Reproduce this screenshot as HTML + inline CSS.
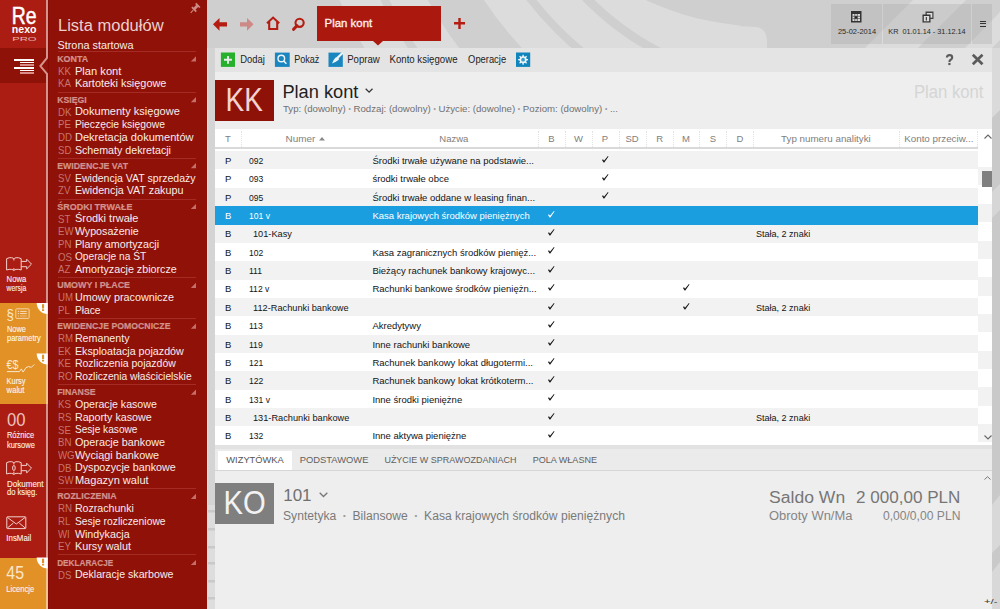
<!DOCTYPE html>
<html><head><meta charset="utf-8"><title>Plan kont</title>
<style>
*{margin:0;padding:0;box-sizing:border-box}
html,body{width:1000px;height:609px;overflow:hidden}
body{position:relative;background:#d3d3d3;font-family:"Liberation Sans",sans-serif}
.a{position:absolute;white-space:nowrap}
svg{overflow:visible}
</style></head><body>
<svg class="a" style="left:0;top:0" width="1000" height="609" viewBox="0 0 1000 609">
<rect width="1000" height="609" fill="#cfcfcf"/>
<circle cx="791" cy="-203" r="308" fill="none" stroke="#dcdcdc" stroke-width="120"/>
<circle cx="791" cy="-203" r="455.5" fill="none" stroke="#dcdcdc" stroke-width="79"/>
<circle cx="791" cy="-203" r="454" fill="none" stroke="#cfcfcf" stroke-width="8"/>
<circle cx="791" cy="-203" r="329.5" fill="none" stroke="#cfcfcf" stroke-width="8"/>
<circle cx="791" cy="-203" r="287" fill="none" stroke="#cfcfcf" stroke-width="8.5"/>
<path d="M640 0 H767 V48 H640 Z" fill="#dcdcdc"/>
<circle cx="765" cy="-255" r="281.5" fill="#cfcfcf"/>
<path d="M740 0 H767 V40 Q766 28.5 757 26.9 Q750 26.5 740 26.3 Z" fill="#cfcfcf"/>
<circle cx="791" cy="-203" r="287" fill="none" stroke="#cfcfcf" stroke-width="8.5"/>
<rect x="767" y="0" width="233" height="48" fill="#cfcfcf"/>
<path d="M913 0 L966 0 L918 48 L865 48 Z" fill="#dcdcdc"/>
<path d="M1000 12 L1000 40 L992 48 L965 48 Z" fill="#dcdcdc"/>
<path d="M992 230 L1000 222 L1000 240 L992 248 Z" fill="#dcdcdc"/>
<path d="M992 500 L1000 492 L1000 520 L992 528 Z" fill="#dcdcdc"/>
<rect x="207" y="48" width="8" height="561" fill="#d4d4d4"/>
<rect x="207" y="48" width="1" height="561" fill="#e2e2e2"/>
<rect x="207" y="505" width="8" height="104" fill="#dddddd"/>
<rect x="208" y="510" width="7" height="2.5" fill="#c9c9c9"/>
<rect x="208" y="528" width="7" height="2.5" fill="#c9c9c9"/>
<rect x="208" y="546" width="7" height="2.5" fill="#c9c9c9"/>
<rect x="208" y="562" width="7" height="2.5" fill="#c9c9c9"/>
<rect x="208" y="580" width="7" height="2.5" fill="#c9c9c9"/>
<rect x="208" y="597" width="7" height="2.5" fill="#c9c9c9"/>
</svg>
<div class="a" style="left:0px;top:0px;width:46px;height:609px;background:#ab1d13;"></div>
<div class="a" style="left:0px;top:48px;width:46px;height:35px;background:#8f1208;"></div>
<svg class="a" style="left:0;top:0" width="46" height="48" viewBox="0 0 46 48" font-family="Liberation Sans"><text x="11.8" y="24" font-size="23.5" fill="#fff" stroke="#fff" stroke-width="0.5" textLength="24.8" lengthAdjust="spacingAndGlyphs">Re</text><text x="11.8" y="33" font-size="10" font-weight="bold" fill="#fff" textLength="24.8" lengthAdjust="spacingAndGlyphs">nexo</text><text x="12.2" y="40.6" font-size="5.8" fill="#e9b3ae" textLength="24.4" lengthAdjust="spacingAndGlyphs">PRO</text></svg>
<div class="a" style="left:13.6px;top:59.1px;width:20.699999999999996px;height:1.6px;background:#fff;"></div>
<div class="a" style="left:20px;top:62px;width:14.299999999999997px;height:1.1px;background:#fff;"></div>
<div class="a" style="left:20px;top:64.3px;width:14.299999999999997px;height:1.5px;background:#d98c88;"></div>
<div class="a" style="left:13.6px;top:67px;width:20.699999999999996px;height:1.6px;background:#fff;"></div>
<div class="a" style="left:20px;top:70px;width:14.299999999999997px;height:1.1px;background:#fff;"></div>
<div class="a" style="left:20px;top:72.2px;width:14.299999999999997px;height:1.6px;background:#d98c88;"></div>
<div class="a" style="left:0px;top:303px;width:46px;height:101px;background:#e19126;"></div>
<div class="a" style="left:0px;top:557.5px;width:46px;height:52px;background:#e19126;"></div>
<div class="a" style="left:46px;top:0px;width:161px;height:609px;background:#8f1107;"></div>
<div class="a" style="left:48px;top:0px;width:1px;height:609px;background:#870b05;"></div>
<svg class="a" style="left:36px;top:0" width="14" height="609" viewBox="36 0 14 609"><path d="M47 57.6 L40.2 66.1 L47 74 Z" fill="#8f1107"/><path d="M47 0 V57.8 L40.4 66.1 L47 73.8 V609" fill="none" stroke="#d6938c" stroke-width="2"/></svg>
<svg class="a" style="left:0;top:0" width="1" height="1"><g stroke="#cf8a85" fill="none"><path d="M194.2 8.9 L197.9 5.2" stroke-width="2.8"/><path d="M195.7 3.3 L199.9 7.5" stroke-width="1.7"/><path d="M191.9 7.2 L196.3 11.6" stroke-width="1.7"/><path d="M193.3 10 L190.7 12.8" stroke-width="1.1"/></g></svg>
<svg class="a" style="left:0;top:0;overflow:visible" width="1" height="1"><text x="58" y="30.5" font-family="Liberation Sans" font-size="16" fill="#ebd0cf" font-weight="normal" text-anchor="start" textLength="105.6" lengthAdjust="spacingAndGlyphs" style="white-space:pre;">Lista modułów</text></svg>
<svg class="a" style="left:0;top:0;overflow:visible" width="1" height="1"><text x="57.5" y="48.8" font-family="Liberation Sans" font-size="11" fill="#f7eaea" font-weight="normal" text-anchor="start" textLength="76" lengthAdjust="spacingAndGlyphs" style="white-space:pre;">Strona startowa</text></svg>
<div class="a" style="left:58px;top:51px;width:138px;height:1px;background:#a52c24;"></div>
<svg class="a" style="left:0;top:0;overflow:visible" width="1" height="1"><text x="57.2" y="61.900000000000006" font-family="Liberation Sans" font-size="9.6" fill="#d3928d" font-weight="bold" text-anchor="start" textLength="31" lengthAdjust="spacingAndGlyphs" style="white-space:pre;stroke:#d3928d;stroke-width:0.2px;">KONTA</text></svg>
<svg class="a" style="left:0;top:0" width="1" height="1"><path d="M196 56.2 V61.4 H190.8 Z" fill="#c46f69"/></svg>
<div class="a" style="left:57.5px;top:65.81px;font-size:10.5px;line-height:10.5px;color:#c8746f;font-weight:normal;transform:scaleX(0.92);transform-origin:left top;">KK</div>
<svg class="a" style="left:0;top:0;overflow:visible" width="1" height="1"><text x="74.9" y="74.7" font-family="Liberation Sans" font-size="11" fill="#f9ebea" font-weight="normal" text-anchor="start" textLength="46.5" lengthAdjust="spacingAndGlyphs" style="white-space:pre;">Plan kont</text></svg>
<div class="a" style="left:57.5px;top:78.48px;font-size:10.5px;line-height:10.5px;color:#c8746f;font-weight:normal;transform:scaleX(0.92);transform-origin:left top;">KA</div>
<svg class="a" style="left:0;top:0;overflow:visible" width="1" height="1"><text x="74.9" y="87.37" font-family="Liberation Sans" font-size="11" fill="#f9ebea" font-weight="normal" text-anchor="start" textLength="91.5" lengthAdjust="spacingAndGlyphs" style="white-space:pre;">Kartoteki księgowe</text></svg>
<div class="a" style="left:58px;top:92px;width:138px;height:1px;background:#a52c24;"></div>
<svg class="a" style="left:0;top:0;overflow:visible" width="1" height="1"><text x="57.2" y="102.69000000000001" font-family="Liberation Sans" font-size="9.6" fill="#d3928d" font-weight="bold" text-anchor="start" textLength="29.5" lengthAdjust="spacingAndGlyphs" style="white-space:pre;stroke:#d3928d;stroke-width:0.2px;">KSIĘGI</text></svg>
<svg class="a" style="left:0;top:0" width="1" height="1"><path d="M196 97.0 V102.2 H190.8 Z" fill="#c46f69"/></svg>
<div class="a" style="left:57.5px;top:106.60px;font-size:10.5px;line-height:10.5px;color:#c8746f;font-weight:normal;transform:scaleX(0.92);transform-origin:left top;">DK</div>
<svg class="a" style="left:0;top:0;overflow:visible" width="1" height="1"><text x="74.9" y="115.49000000000001" font-family="Liberation Sans" font-size="11" fill="#f9ebea" font-weight="normal" text-anchor="start" textLength="104.9" lengthAdjust="spacingAndGlyphs" style="white-space:pre;">Dokumenty księgowe</text></svg>
<div class="a" style="left:57.5px;top:119.27px;font-size:10.5px;line-height:10.5px;color:#c8746f;font-weight:normal;transform:scaleX(0.92);transform-origin:left top;">PE</div>
<svg class="a" style="left:0;top:0;overflow:visible" width="1" height="1"><text x="74.9" y="128.16" font-family="Liberation Sans" font-size="11" fill="#f9ebea" font-weight="normal" text-anchor="start" textLength="90.1" lengthAdjust="spacingAndGlyphs" style="white-space:pre;">Pieczęcie księgowe</text></svg>
<div class="a" style="left:57.5px;top:131.94px;font-size:10.5px;line-height:10.5px;color:#c8746f;font-weight:normal;transform:scaleX(0.92);transform-origin:left top;">DD</div>
<svg class="a" style="left:0;top:0;overflow:visible" width="1" height="1"><text x="74.9" y="140.82999999999998" font-family="Liberation Sans" font-size="11" fill="#f9ebea" font-weight="normal" text-anchor="start" textLength="118.7" lengthAdjust="spacingAndGlyphs" style="white-space:pre;">Dekretacja dokumentów</text></svg>
<div class="a" style="left:57.5px;top:144.61px;font-size:10.5px;line-height:10.5px;color:#c8746f;font-weight:normal;transform:scaleX(0.92);transform-origin:left top;">SD</div>
<svg class="a" style="left:0;top:0;overflow:visible" width="1" height="1"><text x="74.9" y="153.49999999999997" font-family="Liberation Sans" font-size="11" fill="#f9ebea" font-weight="normal" text-anchor="start" textLength="96.1" lengthAdjust="spacingAndGlyphs" style="white-space:pre;">Schematy dekretacji</text></svg>
<div class="a" style="left:58px;top:158px;width:138px;height:1px;background:#a52c24;"></div>
<svg class="a" style="left:0;top:0;overflow:visible" width="1" height="1"><text x="57.2" y="168.82" font-family="Liberation Sans" font-size="9.6" fill="#d3928d" font-weight="bold" text-anchor="start" textLength="70.9" lengthAdjust="spacingAndGlyphs" style="white-space:pre;stroke:#d3928d;stroke-width:0.2px;">EWIDENCJE VAT</text></svg>
<svg class="a" style="left:0;top:0" width="1" height="1"><path d="M196 163.1 V168.3 H190.8 Z" fill="#c46f69"/></svg>
<div class="a" style="left:57.5px;top:172.73px;font-size:10.5px;line-height:10.5px;color:#c8746f;font-weight:normal;transform:scaleX(0.92);transform-origin:left top;">SV</div>
<svg class="a" style="left:0;top:0;overflow:visible" width="1" height="1"><text x="74.9" y="181.62" font-family="Liberation Sans" font-size="11" fill="#f9ebea" font-weight="normal" text-anchor="start" textLength="120.7" lengthAdjust="spacingAndGlyphs" style="white-space:pre;">Ewidencja VAT sprzedaży</text></svg>
<div class="a" style="left:57.5px;top:185.40px;font-size:10.5px;line-height:10.5px;color:#c8746f;font-weight:normal;transform:scaleX(0.92);transform-origin:left top;">ZV</div>
<svg class="a" style="left:0;top:0;overflow:visible" width="1" height="1"><text x="74.9" y="194.29" font-family="Liberation Sans" font-size="11" fill="#f9ebea" font-weight="normal" text-anchor="start" textLength="108.5" lengthAdjust="spacingAndGlyphs" style="white-space:pre;">Ewidencja VAT zakupu</text></svg>
<div class="a" style="left:58px;top:199px;width:138px;height:1px;background:#a52c24;"></div>
<svg class="a" style="left:0;top:0;overflow:visible" width="1" height="1"><text x="57.2" y="209.60999999999999" font-family="Liberation Sans" font-size="9.6" fill="#d3928d" font-weight="bold" text-anchor="start" textLength="75.2" lengthAdjust="spacingAndGlyphs" style="white-space:pre;stroke:#d3928d;stroke-width:0.2px;">ŚRODKI TRWAŁE</text></svg>
<svg class="a" style="left:0;top:0" width="1" height="1"><path d="M196 203.9 V209.1 H190.8 Z" fill="#c46f69"/></svg>
<div class="a" style="left:57.5px;top:213.52px;font-size:10.5px;line-height:10.5px;color:#c8746f;font-weight:normal;transform:scaleX(0.92);transform-origin:left top;">ST</div>
<svg class="a" style="left:0;top:0;overflow:visible" width="1" height="1"><text x="74.9" y="222.41" font-family="Liberation Sans" font-size="11" fill="#f9ebea" font-weight="normal" text-anchor="start" textLength="63.5" lengthAdjust="spacingAndGlyphs" style="white-space:pre;">Środki trwałe</text></svg>
<div class="a" style="left:57.5px;top:226.19px;font-size:10.5px;line-height:10.5px;color:#c8746f;font-weight:normal;transform:scaleX(0.92);transform-origin:left top;">EW</div>
<svg class="a" style="left:0;top:0;overflow:visible" width="1" height="1"><text x="74.9" y="235.07999999999998" font-family="Liberation Sans" font-size="11" fill="#f9ebea" font-weight="normal" text-anchor="start" textLength="63.9" lengthAdjust="spacingAndGlyphs" style="white-space:pre;">Wyposażenie</text></svg>
<div class="a" style="left:57.5px;top:238.86px;font-size:10.5px;line-height:10.5px;color:#c8746f;font-weight:normal;transform:scaleX(0.92);transform-origin:left top;">PN</div>
<svg class="a" style="left:0;top:0;overflow:visible" width="1" height="1"><text x="74.9" y="247.74999999999997" font-family="Liberation Sans" font-size="11" fill="#f9ebea" font-weight="normal" text-anchor="start" textLength="84.2" lengthAdjust="spacingAndGlyphs" style="white-space:pre;">Plany amortyzacji</text></svg>
<div class="a" style="left:57.5px;top:251.53px;font-size:10.5px;line-height:10.5px;color:#c8746f;font-weight:normal;transform:scaleX(0.92);transform-origin:left top;">OS</div>
<svg class="a" style="left:0;top:0;overflow:visible" width="1" height="1"><text x="74.9" y="260.41999999999996" font-family="Liberation Sans" font-size="11" fill="#f9ebea" font-weight="normal" text-anchor="start" textLength="71.4" lengthAdjust="spacingAndGlyphs" style="white-space:pre;">Operacje na ŚT</text></svg>
<div class="a" style="left:57.5px;top:264.20px;font-size:10.5px;line-height:10.5px;color:#c8746f;font-weight:normal;transform:scaleX(0.92);transform-origin:left top;">AZ</div>
<svg class="a" style="left:0;top:0;overflow:visible" width="1" height="1"><text x="74.9" y="273.09" font-family="Liberation Sans" font-size="11" fill="#f9ebea" font-weight="normal" text-anchor="start" textLength="101.9" lengthAdjust="spacingAndGlyphs" style="white-space:pre;">Amortyzacje zbiorcze</text></svg>
<div class="a" style="left:58px;top:277px;width:138px;height:1px;background:#a52c24;"></div>
<svg class="a" style="left:0;top:0;overflow:visible" width="1" height="1"><text x="57.2" y="288.40999999999997" font-family="Liberation Sans" font-size="9.6" fill="#d3928d" font-weight="bold" text-anchor="start" textLength="72.9" lengthAdjust="spacingAndGlyphs" style="white-space:pre;stroke:#d3928d;stroke-width:0.2px;">UMOWY I PŁACE</text></svg>
<svg class="a" style="left:0;top:0" width="1" height="1"><path d="M196 282.7 V287.9 H190.8 Z" fill="#c46f69"/></svg>
<div class="a" style="left:57.5px;top:292.32px;font-size:10.5px;line-height:10.5px;color:#c8746f;font-weight:normal;transform:scaleX(0.92);transform-origin:left top;">UM</div>
<svg class="a" style="left:0;top:0;overflow:visible" width="1" height="1"><text x="74.9" y="301.21" font-family="Liberation Sans" font-size="11" fill="#f9ebea" font-weight="normal" text-anchor="start" textLength="99.0" lengthAdjust="spacingAndGlyphs" style="white-space:pre;">Umowy pracownicze</text></svg>
<div class="a" style="left:57.5px;top:304.99px;font-size:10.5px;line-height:10.5px;color:#c8746f;font-weight:normal;transform:scaleX(0.92);transform-origin:left top;">PL</div>
<svg class="a" style="left:0;top:0;overflow:visible" width="1" height="1"><text x="74.9" y="313.88" font-family="Liberation Sans" font-size="11" fill="#f9ebea" font-weight="normal" text-anchor="start" textLength="25.7" lengthAdjust="spacingAndGlyphs" style="white-space:pre;">Płace</text></svg>
<div class="a" style="left:58px;top:318px;width:138px;height:1px;background:#a52c24;"></div>
<svg class="a" style="left:0;top:0;overflow:visible" width="1" height="1"><text x="57.2" y="329.19999999999993" font-family="Liberation Sans" font-size="9.6" fill="#d3928d" font-weight="bold" text-anchor="start" textLength="113.3" lengthAdjust="spacingAndGlyphs" style="white-space:pre;stroke:#d3928d;stroke-width:0.2px;">EWIDENCJE POMOCNICZE</text></svg>
<svg class="a" style="left:0;top:0" width="1" height="1"><path d="M196 323.5 V328.7 H190.8 Z" fill="#c46f69"/></svg>
<div class="a" style="left:57.5px;top:333.11px;font-size:10.5px;line-height:10.5px;color:#c8746f;font-weight:normal;transform:scaleX(0.92);transform-origin:left top;">RM</div>
<svg class="a" style="left:0;top:0;overflow:visible" width="1" height="1"><text x="74.9" y="341.99999999999994" font-family="Liberation Sans" font-size="11" fill="#f9ebea" font-weight="normal" text-anchor="start" textLength="54.7" lengthAdjust="spacingAndGlyphs" style="white-space:pre;">Remanenty</text></svg>
<div class="a" style="left:57.5px;top:345.78px;font-size:10.5px;line-height:10.5px;color:#c8746f;font-weight:normal;transform:scaleX(0.92);transform-origin:left top;">EK</div>
<svg class="a" style="left:0;top:0;overflow:visible" width="1" height="1"><text x="74.9" y="354.66999999999996" font-family="Liberation Sans" font-size="11" fill="#f9ebea" font-weight="normal" text-anchor="start" textLength="108.9" lengthAdjust="spacingAndGlyphs" style="white-space:pre;">Eksploatacja pojazdów</text></svg>
<div class="a" style="left:57.5px;top:358.45px;font-size:10.5px;line-height:10.5px;color:#c8746f;font-weight:normal;transform:scaleX(0.92);transform-origin:left top;">KE</div>
<svg class="a" style="left:0;top:0;overflow:visible" width="1" height="1"><text x="74.9" y="367.34" font-family="Liberation Sans" font-size="11" fill="#f9ebea" font-weight="normal" text-anchor="start" textLength="100.9" lengthAdjust="spacingAndGlyphs" style="white-space:pre;">Rozliczenia pojazdów</text></svg>
<div class="a" style="left:57.5px;top:371.12px;font-size:10.5px;line-height:10.5px;color:#c8746f;font-weight:normal;transform:scaleX(0.92);transform-origin:left top;">RO</div>
<svg class="a" style="left:0;top:0;overflow:visible" width="1" height="1"><text x="74.9" y="380.01" font-family="Liberation Sans" font-size="11" fill="#f9ebea" font-weight="normal" text-anchor="start" textLength="116.7" lengthAdjust="spacingAndGlyphs" style="white-space:pre;">Rozliczenia właścicielskie</text></svg>
<div class="a" style="left:58px;top:384px;width:138px;height:1px;background:#a52c24;"></div>
<svg class="a" style="left:0;top:0;overflow:visible" width="1" height="1"><text x="57.2" y="395.3299999999999" font-family="Liberation Sans" font-size="9.6" fill="#d3928d" font-weight="bold" text-anchor="start" textLength="38.4" lengthAdjust="spacingAndGlyphs" style="white-space:pre;stroke:#d3928d;stroke-width:0.2px;">FINANSE</text></svg>
<svg class="a" style="left:0;top:0" width="1" height="1"><path d="M196 389.6 V394.8 H190.8 Z" fill="#c46f69"/></svg>
<div class="a" style="left:57.5px;top:399.24px;font-size:10.5px;line-height:10.5px;color:#c8746f;font-weight:normal;transform:scaleX(0.92);transform-origin:left top;">KS</div>
<svg class="a" style="left:0;top:0;overflow:visible" width="1" height="1"><text x="74.9" y="408.12999999999994" font-family="Liberation Sans" font-size="11" fill="#f9ebea" font-weight="normal" text-anchor="start" textLength="81.9" lengthAdjust="spacingAndGlyphs" style="white-space:pre;">Operacje kasowe</text></svg>
<div class="a" style="left:57.5px;top:411.91px;font-size:10.5px;line-height:10.5px;color:#c8746f;font-weight:normal;transform:scaleX(0.92);transform-origin:left top;">RS</div>
<svg class="a" style="left:0;top:0;overflow:visible" width="1" height="1"><text x="74.9" y="420.79999999999995" font-family="Liberation Sans" font-size="11" fill="#f9ebea" font-weight="normal" text-anchor="start" textLength="76.9" lengthAdjust="spacingAndGlyphs" style="white-space:pre;">Raporty kasowe</text></svg>
<div class="a" style="left:57.5px;top:424.58px;font-size:10.5px;line-height:10.5px;color:#c8746f;font-weight:normal;transform:scaleX(0.92);transform-origin:left top;">SE</div>
<svg class="a" style="left:0;top:0;overflow:visible" width="1" height="1"><text x="74.9" y="433.46999999999997" font-family="Liberation Sans" font-size="11" fill="#f9ebea" font-weight="normal" text-anchor="start" textLength="62.6" lengthAdjust="spacingAndGlyphs" style="white-space:pre;">Sesje kasowe</text></svg>
<div class="a" style="left:57.5px;top:437.25px;font-size:10.5px;line-height:10.5px;color:#c8746f;font-weight:normal;transform:scaleX(0.92);transform-origin:left top;">BN</div>
<svg class="a" style="left:0;top:0;overflow:visible" width="1" height="1"><text x="74.9" y="446.14" font-family="Liberation Sans" font-size="11" fill="#f9ebea" font-weight="normal" text-anchor="start" textLength="90.1" lengthAdjust="spacingAndGlyphs" style="white-space:pre;">Operacje bankowe</text></svg>
<div class="a" style="left:57.5px;top:449.92px;font-size:10.5px;line-height:10.5px;color:#c8746f;font-weight:normal;transform:scaleX(0.92);transform-origin:left top;">WG</div>
<svg class="a" style="left:0;top:0;overflow:visible" width="1" height="1"><text x="74.9" y="458.81" font-family="Liberation Sans" font-size="11" fill="#f9ebea" font-weight="normal" text-anchor="start" textLength="84.2" lengthAdjust="spacingAndGlyphs" style="white-space:pre;">Wyciągi bankowe</text></svg>
<div class="a" style="left:57.5px;top:462.59px;font-size:10.5px;line-height:10.5px;color:#c8746f;font-weight:normal;transform:scaleX(0.92);transform-origin:left top;">DB</div>
<svg class="a" style="left:0;top:0;overflow:visible" width="1" height="1"><text x="74.9" y="471.48" font-family="Liberation Sans" font-size="11" fill="#f9ebea" font-weight="normal" text-anchor="start" textLength="100.9" lengthAdjust="spacingAndGlyphs" style="white-space:pre;">Dyspozycje bankowe</text></svg>
<div class="a" style="left:57.5px;top:475.26px;font-size:10.5px;line-height:10.5px;color:#c8746f;font-weight:normal;transform:scaleX(0.92);transform-origin:left top;">SW</div>
<svg class="a" style="left:0;top:0;overflow:visible" width="1" height="1"><text x="74.9" y="484.15000000000003" font-family="Liberation Sans" font-size="11" fill="#f9ebea" font-weight="normal" text-anchor="start" textLength="73.8" lengthAdjust="spacingAndGlyphs" style="white-space:pre;">Magazyn walut</text></svg>
<div class="a" style="left:58px;top:488px;width:138px;height:1px;background:#a52c24;"></div>
<svg class="a" style="left:0;top:0;overflow:visible" width="1" height="1"><text x="57.2" y="499.46999999999997" font-family="Liberation Sans" font-size="9.6" fill="#d3928d" font-weight="bold" text-anchor="start" textLength="59.5" lengthAdjust="spacingAndGlyphs" style="white-space:pre;stroke:#d3928d;stroke-width:0.2px;">ROZLICZENIA</text></svg>
<svg class="a" style="left:0;top:0" width="1" height="1"><path d="M196 493.8 V499.0 H190.8 Z" fill="#c46f69"/></svg>
<div class="a" style="left:57.5px;top:503.38px;font-size:10.5px;line-height:10.5px;color:#c8746f;font-weight:normal;transform:scaleX(0.92);transform-origin:left top;">RN</div>
<svg class="a" style="left:0;top:0;overflow:visible" width="1" height="1"><text x="74.9" y="512.27" font-family="Liberation Sans" font-size="11" fill="#f9ebea" font-weight="normal" text-anchor="start" textLength="59.0" lengthAdjust="spacingAndGlyphs" style="white-space:pre;">Rozrachunki</text></svg>
<div class="a" style="left:57.5px;top:516.05px;font-size:10.5px;line-height:10.5px;color:#c8746f;font-weight:normal;transform:scaleX(0.92);transform-origin:left top;">RL</div>
<svg class="a" style="left:0;top:0;overflow:visible" width="1" height="1"><text x="74.9" y="524.9399999999999" font-family="Liberation Sans" font-size="11" fill="#f9ebea" font-weight="normal" text-anchor="start" textLength="90.7" lengthAdjust="spacingAndGlyphs" style="white-space:pre;">Sesje rozliczeniowe</text></svg>
<div class="a" style="left:57.5px;top:528.72px;font-size:10.5px;line-height:10.5px;color:#c8746f;font-weight:normal;transform:scaleX(0.92);transform-origin:left top;">WI</div>
<svg class="a" style="left:0;top:0;overflow:visible" width="1" height="1"><text x="74.9" y="537.6099999999999" font-family="Liberation Sans" font-size="11" fill="#f9ebea" font-weight="normal" text-anchor="start" textLength="54.7" lengthAdjust="spacingAndGlyphs" style="white-space:pre;">Windykacja</text></svg>
<div class="a" style="left:57.5px;top:541.39px;font-size:10.5px;line-height:10.5px;color:#c8746f;font-weight:normal;transform:scaleX(0.92);transform-origin:left top;">EY</div>
<svg class="a" style="left:0;top:0;overflow:visible" width="1" height="1"><text x="74.9" y="550.2799999999999" font-family="Liberation Sans" font-size="11" fill="#f9ebea" font-weight="normal" text-anchor="start" textLength="56.1" lengthAdjust="spacingAndGlyphs" style="white-space:pre;">Kursy walut</text></svg>
<div class="a" style="left:58px;top:554px;width:138px;height:1px;background:#a52c24;"></div>
<svg class="a" style="left:0;top:0;overflow:visible" width="1" height="1"><text x="57.2" y="565.6" font-family="Liberation Sans" font-size="9.6" fill="#d3928d" font-weight="bold" text-anchor="start" textLength="56" lengthAdjust="spacingAndGlyphs" style="white-space:pre;stroke:#d3928d;stroke-width:0.2px;">DEKLARACJE</text></svg>
<svg class="a" style="left:0;top:0" width="1" height="1"><path d="M196 559.9 V565.1 H190.8 Z" fill="#c46f69"/></svg>
<div class="a" style="left:57.5px;top:569.51px;font-size:10.5px;line-height:10.5px;color:#c8746f;font-weight:normal;transform:scaleX(0.92);transform-origin:left top;">DS</div>
<svg class="a" style="left:0;top:0;overflow:visible" width="1" height="1"><text x="74.9" y="578.4" font-family="Liberation Sans" font-size="11" fill="#f9ebea" font-weight="normal" text-anchor="start" textLength="98.6" lengthAdjust="spacingAndGlyphs" style="white-space:pre;">Deklaracje skarbowe</text></svg>
<svg class="a" style="left:0;top:0" width="1" height="1"><g transform="translate(6.1 257.1)" fill="none" stroke="#f2cfcb" stroke-width="1"><path d="M0.5 1.6 Q3 0.2 5.6 0.6 Q7.1 0.9 7.8 1.8 Q8.5 0.9 10 0.6 Q12.6 0.2 15.1 1.6 V12.9 Q12.6 11.9 10 12.3 Q8.5 12.6 7.8 13.4 Q7.1 12.6 5.6 12.3 Q3 11.9 0.5 12.9 Z"/><path d="M7.8 1.8 V3.4 M7.8 11 V13.2"/><path d="M15.1 4.3 H20.6 V2.1 L25.4 7 L20.6 11.8 V9.6 H15.1" stroke-linejoin="round"/></g></svg>
<svg class="a" style="left:0;top:0;overflow:visible" width="1" height="1"><text x="6.6" y="281.8" font-family="Liberation Sans" font-size="8.2" fill="#fbf0ef" font-weight="normal" text-anchor="start" textLength="19.7" lengthAdjust="spacingAndGlyphs" style="white-space:pre;stroke:#fbf0ef;stroke-width:0.1px;">Nowa</text></svg>
<svg class="a" style="left:0;top:0;overflow:visible" width="1" height="1"><text x="6.6" y="290.5" font-family="Liberation Sans" font-size="8.2" fill="#fbf0ef" font-weight="normal" text-anchor="start" textLength="19.7" lengthAdjust="spacingAndGlyphs" style="white-space:pre;stroke:#fbf0ef;stroke-width:0.1px;">wersja</text></svg>
<svg class="a" style="left:0;top:0" width="1" height="1"><text x="6.6" y="319.6" font-size="14.5" fill="#fbe6cc" font-family="Liberation Sans" textLength="7.4" lengthAdjust="spacingAndGlyphs">§</text><rect x="15.8" y="308.8" width="13.3" height="9.6" rx="0.8" fill="none" stroke="#f5d3a6" stroke-width="1"/><path d="M17.8 311.4 H19 M20.1 311.4 H26.7 M17.8 313.6 H19 M20.1 313.6 H26.7" stroke="#fbe6cc" stroke-width="0.9"/><path d="M17.8 316 H19 M20.1 316 H26.7" stroke="#f0c48a" stroke-width="0.9"/></svg>
<svg class="a" style="left:0;top:0;overflow:visible" width="1" height="1"><text x="7" y="332.4" font-family="Liberation Sans" font-size="8.2" fill="#fff7ec" font-weight="normal" text-anchor="start" textLength="18.9" lengthAdjust="spacingAndGlyphs" style="white-space:pre;stroke:#fff7ec;stroke-width:0.1px;">Nowe</text></svg>
<svg class="a" style="left:0;top:0;overflow:visible" width="1" height="1"><text x="7" y="341.2" font-family="Liberation Sans" font-size="8.2" fill="#fff7ec" font-weight="normal" text-anchor="start" textLength="33.7" lengthAdjust="spacingAndGlyphs" style="white-space:pre;stroke:#fff7ec;stroke-width:0.1px;">parametry</text></svg>
<svg class="a" style="left:0;top:0" width="1" height="1"><text x="6.6" y="368.9" font-size="12" fill="#fbe6cc" font-family="Liberation Sans" textLength="12" lengthAdjust="spacingAndGlyphs">€$</text><path d="M6.9 371.6 H19.5" stroke="#fbe6cc" stroke-width="1"/><path d="M19.5 371.5 L21.3 368.9 L23.1 372.1 L26 367.6 L28.5 366.6 L31.4 367.3 L34.3 364.4" fill="none" stroke="#fbe6cc" stroke-width="1"/></svg>
<svg class="a" style="left:0;top:0;overflow:visible" width="1" height="1"><text x="6.6" y="384.2" font-family="Liberation Sans" font-size="8.2" fill="#fff7ec" font-weight="normal" text-anchor="start" textLength="18.9" lengthAdjust="spacingAndGlyphs" style="white-space:pre;stroke:#fff7ec;stroke-width:0.1px;">Kursy</text></svg>
<svg class="a" style="left:0;top:0;overflow:visible" width="1" height="1"><text x="6.6" y="393.2" font-family="Liberation Sans" font-size="8.2" fill="#fff7ec" font-weight="normal" text-anchor="start" textLength="17.9" lengthAdjust="spacingAndGlyphs" style="white-space:pre;stroke:#fff7ec;stroke-width:0.1px;">walut</text></svg>
<div class="a" style="left:46px;top:303px;width:2px;height:101px;background:#f0c58c;"></div>
<div class="a" style="left:46px;top:557.5px;width:2px;height:52px;background:#f0c58c;"></div>
<svg class="a" style="left:0;top:0" width="1" height="1"><clipPath id="cb303"><rect x="36" y="303" width="11.6" height="11.5"/></clipPath><circle cx="47.6" cy="303" r="10.9" fill="#fff" clip-path="url(#cb303)"/><rect x="42" y="304.2" width="2.1" height="4.3" fill="#e19126"/><rect x="42" y="309.2" width="2.1" height="1.8" fill="#e19126"/></svg>
<svg class="a" style="left:0;top:0" width="1" height="1"><clipPath id="cb353"><rect x="36" y="353.5" width="11.6" height="11.5"/></clipPath><circle cx="47.6" cy="353.5" r="10.9" fill="#fff" clip-path="url(#cb353)"/><rect x="42" y="354.7" width="2.1" height="4.3" fill="#e19126"/><rect x="42" y="359.7" width="2.1" height="1.8" fill="#e19126"/></svg>
<svg class="a" style="left:0;top:0" width="1" height="1"><clipPath id="cb557"><rect x="36" y="557.5" width="11.6" height="11.5"/></clipPath><circle cx="47.6" cy="557.5" r="10.9" fill="#fff" clip-path="url(#cb557)"/><rect x="42" y="558.7" width="2.1" height="4.3" fill="#e19126"/><rect x="42" y="563.7" width="2.1" height="1.8" fill="#e19126"/></svg>
<svg class="a" style="left:0;top:0;overflow:visible" width="1" height="1"><text x="7" y="425.5" font-family="Liberation Sans" font-size="19" fill="#eec3bf" font-weight="normal" text-anchor="start" textLength="18.5" lengthAdjust="spacingAndGlyphs" style="white-space:pre;">00</text></svg>
<svg class="a" style="left:0;top:0;overflow:visible" width="1" height="1"><text x="6.9" y="438.2" font-family="Liberation Sans" font-size="8.2" fill="#fbf0ef" font-weight="normal" text-anchor="start" textLength="27.3" lengthAdjust="spacingAndGlyphs" style="white-space:pre;stroke:#fbf0ef;stroke-width:0.1px;">Różnice</text></svg>
<svg class="a" style="left:0;top:0;overflow:visible" width="1" height="1"><text x="6.9" y="447.9" font-family="Liberation Sans" font-size="8.2" fill="#fbf0ef" font-weight="normal" text-anchor="start" textLength="28" lengthAdjust="spacingAndGlyphs" style="white-space:pre;stroke:#fbf0ef;stroke-width:0.1px;">kursowe</text></svg>
<svg class="a" style="left:0;top:0" width="1" height="1"><g transform="translate(6.1 461.1)" fill="none" stroke="#f2cfcb" stroke-width="1"><path d="M0.5 1.6 Q3 0.2 5.6 0.6 Q7.1 0.9 7.8 1.8 Q8.5 0.9 10 0.6 Q12.6 0.2 15.1 1.6 V12.9 Q12.6 11.9 10 12.3 Q8.5 12.6 7.8 13.4 Q7.1 12.6 5.6 12.3 Q3 11.9 0.5 12.9 Z"/><path d="M7.8 1.8 V3.4 M7.8 10.6 V13.2"/><ellipse cx="7.8" cy="6.9" rx="1.3" ry="2.6"/><path d="M15.1 4.3 H20.6 V2.1 L25.4 7 L20.6 11.8 V9.6 H15.1" stroke-linejoin="round"/></g></svg>
<svg class="a" style="left:0;top:0;overflow:visible" width="1" height="1"><text x="6.9" y="486.5" font-family="Liberation Sans" font-size="8.2" fill="#fbf0ef" font-weight="normal" text-anchor="start" textLength="36.7" lengthAdjust="spacingAndGlyphs" style="white-space:pre;stroke:#fbf0ef;stroke-width:0.1px;">Dokument</text></svg>
<svg class="a" style="left:0;top:0;overflow:visible" width="1" height="1"><text x="6.9" y="495.2" font-family="Liberation Sans" font-size="8.2" fill="#fbf0ef" font-weight="normal" text-anchor="start" textLength="30.6" lengthAdjust="spacingAndGlyphs" style="white-space:pre;stroke:#fbf0ef;stroke-width:0.1px;">do księg.</text></svg>
<svg class="a" style="left:0;top:0" width="1" height="1"><g fill="none" stroke="#f2cfcb" stroke-width="1"><rect x="6.8" y="516.8" width="19" height="11.8" rx="0.6"/><path d="M7.4 517.4 L16.3 524 L25.2 517.4 M7.4 528 L13.4 523 M25.2 528 L19.2 523"/></g></svg>
<svg class="a" style="left:0;top:0;overflow:visible" width="1" height="1"><text x="6.3" y="540.5" font-family="Liberation Sans" font-size="8.2" fill="#fbf0ef" font-weight="normal" text-anchor="start" textLength="25" lengthAdjust="spacingAndGlyphs" style="white-space:pre;stroke:#fbf0ef;stroke-width:0.1px;">InsMail</text></svg>
<svg class="a" style="left:0;top:0;overflow:visible" width="1" height="1"><text x="6.3" y="578.9" font-family="Liberation Sans" font-size="19" fill="#fbe6c8" font-weight="normal" text-anchor="start" textLength="17.7" lengthAdjust="spacingAndGlyphs" style="white-space:pre;">45</text></svg>
<svg class="a" style="left:0;top:0;overflow:visible" width="1" height="1"><text x="6.3" y="591.6" font-family="Liberation Sans" font-size="8.2" fill="#fff7ec" font-weight="normal" text-anchor="start" textLength="27.8" lengthAdjust="spacingAndGlyphs" style="white-space:pre;stroke:#fff7ec;stroke-width:0.1px;">Licencje</text></svg>
<svg class="a" style="left:213px;top:17.6px" width="15" height="13" viewBox="0 0 15 13"><path d="M0 6.3 L6.5 0 V4.2 H14 V8.6 H6.5 V12.8 Z" fill="#b51c12"/></svg>
<svg class="a" style="left:240px;top:17.6px" width="14" height="13" viewBox="0 0 14 13"><path d="M13.5 6.3 L7 0 V4.2 H0 V8.6 H7 V12.8 Z" fill="#cd8985"/></svg>
<svg class="a" style="left:0;top:0" width="1" height="1"><path d="M267 23.2 L273.1 17.6 L279.2 23.2 M269.2 21.6 V29 H277.2 V21.6" fill="none" stroke="#b51c12" stroke-width="2.1" stroke-linejoin="miter"/></svg>
<svg class="a" style="left:0;top:0" width="1" height="1"><circle cx="299.6" cy="22.8" r="4.1" fill="none" stroke="#b51c12" stroke-width="2.1"/><path d="M296.9 25.7 L293.6 29.3" stroke="#b51c12" stroke-width="3.1" stroke-linecap="round"/></svg>
<div class="a" style="left:316.5px;top:6.3px;width:124px;height:35px;background:#aa180e;"></div>
<svg class="a" style="left:373px;top:41px" width="10" height="5"><path d="M0 0 H10 L5 4.5 Z" fill="#aa180e"/></svg>
<svg class="a" style="left:0;top:0;overflow:visible" width="1" height="1"><text x="324.6" y="27.3" font-family="Liberation Sans" font-size="11.5" fill="#fbeeee" font-weight="normal" text-anchor="start" textLength="47.6" lengthAdjust="spacingAndGlyphs" style="white-space:pre;stroke:#fbeeee;stroke-width:0.35px;">Plan kont</text></svg>
<svg class="a" style="left:454px;top:18px" width="12" height="12"><path d="M0 5.3 H11 M5.5 0 V11" stroke="#b51c12" stroke-width="2.4"/></svg>
<div class="a" style="left:831px;top:4px;width:51px;height:39.5px;background:rgba(160,160,160,0.28);"></div>
<div class="a" style="left:883px;top:4px;width:88px;height:39.5px;background:rgba(160,160,160,0.28);"></div>
<div class="a" style="left:972px;top:4px;width:19.5px;height:39.5px;background:rgba(160,160,160,0.28);"></div>
<svg class="a" style="left:851px;top:11px" width="11" height="12" viewBox="0 0 11 12"><rect x="0" y="0" width="10.5" height="11.5" fill="#333"/><rect x="1.5" y="3" width="7.5" height="7" fill="#ddd"/><path d="M1.5 5.3 H9 M1.5 7.6 H9 M3.8 3 V10 M6.3 3 V10" stroke="#555" stroke-width="0.8"/><rect x="3.8" y="5.3" width="2.5" height="2.3" fill="#222"/></svg>
<div class="a" style="left:826.5px;width:60px;text-align:center;top:27.83px;font-size:8px;line-height:8px;color:#2a2a2a;font-weight:normal;transform:scaleX(0.93);transform-origin:center top;">25-02-2014</div>
<svg class="a" style="left:921.5px;top:11px" width="12" height="12" viewBox="0 0 12 12"><rect x="3.5" y="0.5" width="8" height="7.5" fill="#444"/><rect x="4.8" y="2" width="5.5" height="4.7" fill="#ddd"/><rect x="0.5" y="3.5" width="8" height="8" fill="#333"/><rect x="1.8" y="5" width="5.4" height="5.3" fill="#ddd"/><path d="M4.3 6 V9.5" stroke="#222" stroke-width="1"/></svg>
<div class="a" style="left:877.0px;width:100px;text-align:center;top:27.83px;font-size:8px;line-height:8px;color:#2a2a2a;font-weight:normal;transform:scaleX(0.91);transform-origin:center top;">KR&nbsp; 01.01.14 - 31.12.14</div>
<div class="a" style="left:980px;top:20.5px;width:5.5px;height:1.1px;background:#333;"></div>
<div class="a" style="left:980px;top:23px;width:5.5px;height:1.1px;background:#333;"></div>
<div class="a" style="left:980px;top:25.5px;width:5.5px;height:1.1px;background:#333;"></div>
<div class="a" style="left:215px;top:48px;width:777px;height:561px;background:#eeeeee;"></div>
<div class="a" style="left:215px;top:48px;width:777px;height:23.5px;background:#e4e4e4;"></div>
<svg class="a" style="left:0;top:0" width="1" height="1"><rect x="220.9" y="52.5" width="14.1" height="14.4" fill="#27b02c"/><path d="M228 56 V63.8 M224 59.8 H231.9" stroke="#ececec" stroke-width="1.9"/></svg>
<svg class="a" style="left:0;top:0;overflow:visible" width="1" height="1"><text x="240.2" y="62.7" font-family="Liberation Sans" font-size="10" fill="#222" font-weight="normal" text-anchor="start" textLength="24.6" lengthAdjust="spacingAndGlyphs" style="white-space:pre;">Dodaj</text></svg>
<svg class="a" style="left:0;top:0" width="1" height="1"><rect x="274.9" y="52.6" width="14.8" height="14.3" fill="#1a86bf"/><circle cx="281.3" cy="58.5" r="3.3" fill="none" stroke="#eef4f8" stroke-width="1.4"/><path d="M283.7 61 L286.4 63.7" stroke="#eef4f8" stroke-width="1.6"/></svg>
<svg class="a" style="left:0;top:0;overflow:visible" width="1" height="1"><text x="294.2" y="62.7" font-family="Liberation Sans" font-size="10" fill="#222" font-weight="normal" text-anchor="start" textLength="25.2" lengthAdjust="spacingAndGlyphs" style="white-space:pre;">Pokaż</text></svg>
<svg class="a" style="left:0;top:0" width="1" height="1"><rect x="328.5" y="52.6" width="14.3" height="14.3" fill="#1a86bf"/><path d="M342.2 53.2 L337.6 57.8" stroke="#eef4f8" stroke-width="2.3" stroke-linecap="round"/><path d="M338.8 58.6 Q337.6 56.4 335.6 57.6 Q333.2 60 332 63.6 Q335.8 62 337.8 60.4 Q339.6 59.6 338.8 58.6 Z" fill="#eef4f8"/></svg>
<svg class="a" style="left:0;top:0;overflow:visible" width="1" height="1"><text x="347.2" y="62.7" font-family="Liberation Sans" font-size="10" fill="#222" font-weight="normal" text-anchor="start" textLength="32.6" lengthAdjust="spacingAndGlyphs" style="white-space:pre;">Popraw</text></svg>
<svg class="a" style="left:0;top:0;overflow:visible" width="1" height="1"><text x="389.5" y="62.7" font-family="Liberation Sans" font-size="10" fill="#222" font-weight="normal" text-anchor="start" textLength="68" lengthAdjust="spacingAndGlyphs" style="white-space:pre;">Konto księgowe</text></svg>
<svg class="a" style="left:0;top:0;overflow:visible" width="1" height="1"><text x="468.1" y="62.7" font-family="Liberation Sans" font-size="10" fill="#222" font-weight="normal" text-anchor="start" textLength="38" lengthAdjust="spacingAndGlyphs" style="white-space:pre;">Operacje</text></svg>
<svg class="a" style="left:0;top:0" width="1" height="1"><rect x="516" y="52.5" width="14.2" height="14.4" fill="#0f84bd"/><path d="M526.61 58.91 L528.06 59.10 L528.06 60.30 L526.61 60.49 L526.14 61.63 L527.03 62.79 L526.19 63.63 L525.03 62.74 L523.89 63.21 L523.70 64.66 L522.50 64.66 L522.31 63.21 L521.17 62.74 L520.01 63.63 L519.17 62.79 L520.06 61.63 L519.59 60.49 L518.14 60.30 L518.14 59.10 L519.59 58.91 L520.06 57.77 L519.17 56.61 L520.01 55.77 L521.17 56.66 L522.31 56.19 L522.50 54.74 L523.70 54.74 L523.89 56.19 L525.03 56.66 L526.19 55.77 L527.03 56.61 L526.14 57.77 Z" fill="#eef4f8"/><circle cx="523.1" cy="59.7" r="1.9" fill="#3a9ccc"/></svg>
<svg class="a" style="left:0;top:0" width="1" height="1"><path d="M946.9 57.6 Q946.9 55.1 949.6 55.1 Q952.2 55.1 952.2 57.4 Q952.2 58.9 950.7 59.7 Q949.4 60.4 949.4 62" fill="none" stroke="#5b5b5b" stroke-width="2.1"/><rect x="948.3" y="62.9" width="2.2" height="2.2" fill="#5b5b5b"/></svg>
<svg class="a" style="left:0;top:0" width="1" height="1"><path d="M972.8 54.8 L982.5 64.3 M982.5 54.8 L972.8 64.3" stroke="#5b5b5b" stroke-width="2.7"/></svg>
<div class="a" style="left:215.2px;top:80px;width:58.7px;height:40.7px;background:#8e1208;"></div>
<svg class="a" style="left:0;top:0;overflow:visible" width="1" height="1"><text x="225.6" y="110.9" font-family="Liberation Sans" font-size="33" fill="#f3d3d0" font-weight="normal" text-anchor="start" textLength="37.3" lengthAdjust="spacingAndGlyphs" style="white-space:pre;">KK</text></svg>
<svg class="a" style="left:0;top:0;overflow:visible" width="1" height="1"><text x="282.4" y="98.4" font-family="Liberation Sans" font-size="18" fill="#1f1f1f" font-weight="normal" text-anchor="start" textLength="76" lengthAdjust="spacingAndGlyphs" style="white-space:pre;">Plan kont</text></svg>
<svg class="a" style="left:365px;top:88.3px" width="9" height="6"><path d="M0.7 0.7 L4.1 4.1 L7.5 0.7" fill="none" stroke="#333" stroke-width="1.3"/></svg>
<svg class="a" style="left:0;top:0;overflow:visible" width="1" height="1"><text x="283" y="112.4" font-family="Liberation Sans" font-size="9.5" fill="#707070" font-weight="normal" text-anchor="start" textLength="335" lengthAdjust="spacingAndGlyphs" style="white-space:pre;">Typ: (dowolny) <tspan font-size="6.5" dy="-1.6" fill="#999">•</tspan><tspan dy="1.6"> </tspan>Rodzaj: (dowolny) <tspan font-size="6.5" dy="-1.6" fill="#999">•</tspan><tspan dy="1.6"> </tspan>Użycie: (dowolne) <tspan font-size="6.5" dy="-1.6" fill="#999">•</tspan><tspan dy="1.6"> </tspan>Poziom: (dowolny) <tspan font-size="6.5" dy="-1.6" fill="#999">•</tspan><tspan dy="1.6"> </tspan>...</text></svg>
<svg class="a" style="left:0;top:0;overflow:visible" width="1" height="1"><text x="914" y="97.8" font-family="Liberation Sans" font-size="18.5" fill="#d5d5d5" font-weight="normal" text-anchor="start" textLength="69.5" lengthAdjust="spacingAndGlyphs" style="white-space:pre;">Plan kont</text></svg>
<div class="a" style="left:215px;top:129px;width:777px;height:316px;background:#ffffff;"></div>
<div class="a" style="left:215px;top:147px;width:763px;height:2px;background:#d9d9d9;"></div>
<div class="a" style="left:240.6px;top:131px;width:0;height:16px;border-left:1px dotted #e2e2e2"></div>
<div class="a" style="left:537.6px;top:131px;width:0;height:16px;border-left:1px dotted #e2e2e2"></div>
<div class="a" style="left:565.2px;top:131px;width:0;height:16px;border-left:1px dotted #e2e2e2"></div>
<div class="a" style="left:591.6px;top:131px;width:0;height:16px;border-left:1px dotted #e2e2e2"></div>
<div class="a" style="left:618.7px;top:131px;width:0;height:16px;border-left:1px dotted #e2e2e2"></div>
<div class="a" style="left:646px;top:131px;width:0;height:16px;border-left:1px dotted #e2e2e2"></div>
<div class="a" style="left:673px;top:131px;width:0;height:16px;border-left:1px dotted #e2e2e2"></div>
<div class="a" style="left:699.4px;top:131px;width:0;height:16px;border-left:1px dotted #e2e2e2"></div>
<div class="a" style="left:726.4px;top:131px;width:0;height:16px;border-left:1px dotted #e2e2e2"></div>
<div class="a" style="left:753.4px;top:131px;width:0;height:16px;border-left:1px dotted #e2e2e2"></div>
<div class="a" style="left:898.5px;top:131px;width:0;height:16px;border-left:1px dotted #e2e2e2"></div>
<div class="a" style="left:976.6px;top:131px;width:0;height:16px;border-left:1px dotted #e2e2e2"></div>
<div class="a" style="left:225px;top:133.96px;font-size:9.5px;line-height:9.5px;color:#808080;font-weight:normal;">T</div>
<svg class="a" style="left:0;top:0;overflow:visible" width="1" height="1"><text x="285.6" y="142" font-family="Liberation Sans" font-size="9.5" fill="#808080" font-weight="normal" text-anchor="start" textLength="29.8" lengthAdjust="spacingAndGlyphs" style="white-space:pre;">Numer</text></svg>
<svg class="a" style="left:319px;top:137px" width="6" height="4"><path d="M0 3.5 L3 0 L6 3.5 Z" fill="#888"/></svg>
<svg class="a" style="left:0;top:0;overflow:visible" width="1" height="1"><text x="439.3" y="142" font-family="Liberation Sans" font-size="9.5" fill="#808080" font-weight="normal" text-anchor="start" textLength="29.1" lengthAdjust="spacingAndGlyphs" style="white-space:pre;">Nazwa</text></svg>
<div class="a" style="left:538.4px;width:26px;text-align:center;top:133.96px;font-size:9.5px;line-height:9.5px;color:#808080;font-weight:normal;">B</div>
<div class="a" style="left:565.4px;width:26px;text-align:center;top:133.96px;font-size:9.5px;line-height:9.5px;color:#808080;font-weight:normal;">W</div>
<div class="a" style="left:592.0px;width:26px;text-align:center;top:133.96px;font-size:9.5px;line-height:9.5px;color:#808080;font-weight:normal;">P</div>
<div class="a" style="left:619.0px;width:26px;text-align:center;top:133.96px;font-size:9.5px;line-height:9.5px;color:#808080;font-weight:normal;">SD</div>
<div class="a" style="left:646.8px;width:26px;text-align:center;top:133.96px;font-size:9.5px;line-height:9.5px;color:#808080;font-weight:normal;">R</div>
<div class="a" style="left:673.0px;width:26px;text-align:center;top:133.96px;font-size:9.5px;line-height:9.5px;color:#808080;font-weight:normal;">M</div>
<div class="a" style="left:700.0px;width:26px;text-align:center;top:133.96px;font-size:9.5px;line-height:9.5px;color:#808080;font-weight:normal;">S</div>
<div class="a" style="left:727.0px;width:26px;text-align:center;top:133.96px;font-size:9.5px;line-height:9.5px;color:#808080;font-weight:normal;">D</div>
<svg class="a" style="left:0;top:0;overflow:visible" width="1" height="1"><text x="781.1" y="142" font-family="Liberation Sans" font-size="9.5" fill="#808080" font-weight="normal" text-anchor="start" textLength="89.7" lengthAdjust="spacingAndGlyphs" style="white-space:pre;">Typ numeru analityki</text></svg>
<svg class="a" style="left:0;top:0;overflow:visible" width="1" height="1"><text x="904.2" y="142" font-family="Liberation Sans" font-size="9.5" fill="#808080" font-weight="normal" text-anchor="start" textLength="69.2" lengthAdjust="spacingAndGlyphs" style="white-space:pre;">Konto przeciw...</text></svg>
<svg class="a" style="left:983.5px;top:134px" width="8" height="5"><path d="M0.5 4.5 L4 1 L7.5 4.5" fill="none" stroke="#666" stroke-width="1.1"/></svg>
<div class="a" style="left:982.2px;top:170.5px;width:9.8px;height:16.5px;background:#7f7f7f;"></div>
<svg class="a" style="left:983.5px;top:435px" width="8" height="5"><path d="M0.5 0.5 L4 4 L7.5 0.5" fill="none" stroke="#666" stroke-width="1.1"/></svg>
<div class="a" style="left:215px;top:151.1px;width:763px;height:18.36px;background:#f2f2f2;"></div>
<div class="a" style="left:225px;top:155.96px;font-size:9.5px;line-height:9.5px;color:#141414;font-weight:normal;">P</div>
<div class="a" style="left:248.5px;top:155.96px;font-size:9.5px;line-height:9.5px;color:#141414;font-weight:normal;transform:scaleX(0.9);transform-origin:left top;">092</div>
<div class="a" style="left:372.4px;top:155.96px;font-size:9.5px;line-height:9.5px;color:#141414;font-weight:normal;transform:scaleX(1.0);transform-origin:left top;">Środki trwałe używane na podstawie...</div>
<svg class="a" style="left:601.9px;top:155.6px" width="8" height="8" viewBox="0 0 8 8"><path d="M0 3.9 L1.0 3.2 L2.0 4.8 L5.9 0 L6.5 0.4 L2.3 6.6 L1.6 6.6 Z" fill="#141414"/></svg>
<div class="a" style="left:225px;top:174.32px;font-size:9.5px;line-height:9.5px;color:#141414;font-weight:normal;">P</div>
<div class="a" style="left:248.5px;top:174.32px;font-size:9.5px;line-height:9.5px;color:#141414;font-weight:normal;transform:scaleX(0.9);transform-origin:left top;">093</div>
<div class="a" style="left:372.4px;top:174.32px;font-size:9.5px;line-height:9.5px;color:#141414;font-weight:normal;transform:scaleX(1.0);transform-origin:left top;">środki trwałe obce</div>
<svg class="a" style="left:601.9px;top:174.0px" width="8" height="8" viewBox="0 0 8 8"><path d="M0 3.9 L1.0 3.2 L2.0 4.8 L5.9 0 L6.5 0.4 L2.3 6.6 L1.6 6.6 Z" fill="#141414"/></svg>
<div class="a" style="left:215px;top:187.8px;width:763px;height:18.36px;background:#f2f2f2;"></div>
<div class="a" style="left:225px;top:192.68px;font-size:9.5px;line-height:9.5px;color:#141414;font-weight:normal;">P</div>
<div class="a" style="left:248.5px;top:192.68px;font-size:9.5px;line-height:9.5px;color:#141414;font-weight:normal;transform:scaleX(0.9);transform-origin:left top;">095</div>
<div class="a" style="left:372.4px;top:192.68px;font-size:9.5px;line-height:9.5px;color:#141414;font-weight:normal;transform:scaleX(1.0);transform-origin:left top;">Środki trwałe oddane w leasing finan...</div>
<svg class="a" style="left:601.9px;top:192.3px" width="8" height="8" viewBox="0 0 8 8"><path d="M0 3.9 L1.0 3.2 L2.0 4.8 L5.9 0 L6.5 0.4 L2.3 6.6 L1.6 6.6 Z" fill="#141414"/></svg>
<div class="a" style="left:215px;top:206.2px;width:763px;height:18.36px;background:#1a9ee0;"></div>
<div class="a" style="left:225px;top:211.04px;font-size:9.5px;line-height:9.5px;color:#ffffff;font-weight:normal;">B</div>
<div class="a" style="left:248.5px;top:211.04px;font-size:9.5px;line-height:9.5px;color:#ffffff;font-weight:normal;transform:scaleX(0.9);transform-origin:left top;">101 v</div>
<div class="a" style="left:372.4px;top:211.04px;font-size:9.5px;line-height:9.5px;color:#ffffff;font-weight:normal;transform:scaleX(1.0);transform-origin:left top;">Kasa krajowych środków pieniężnych</div>
<svg class="a" style="left:548.4px;top:210.7px" width="8" height="8" viewBox="0 0 8 8"><path d="M0 3.9 L1.0 3.2 L2.0 4.8 L5.9 0 L6.5 0.4 L2.3 6.6 L1.6 6.6 Z" fill="#ffffff"/></svg>
<div class="a" style="left:215px;top:224.5px;width:763px;height:18.36px;background:#f2f2f2;"></div>
<div class="a" style="left:225px;top:229.40px;font-size:9.5px;line-height:9.5px;color:#141414;font-weight:normal;">B</div>
<div class="a" style="left:252.8px;top:229.40px;font-size:9.5px;line-height:9.5px;color:#141414;font-weight:normal;transform:scaleX(0.97);transform-origin:left top;">101-Kasy</div>
<svg class="a" style="left:548.4px;top:229.0px" width="8" height="8" viewBox="0 0 8 8"><path d="M0 3.9 L1.0 3.2 L2.0 4.8 L5.9 0 L6.5 0.4 L2.3 6.6 L1.6 6.6 Z" fill="#141414"/></svg>
<div class="a" style="left:756px;top:229.40px;font-size:9.5px;line-height:9.5px;color:#141414;font-weight:normal;transform:scaleX(0.95);transform-origin:left top;">Stała, 2 znaki</div>
<div class="a" style="left:225px;top:247.76px;font-size:9.5px;line-height:9.5px;color:#141414;font-weight:normal;">B</div>
<div class="a" style="left:248.5px;top:247.76px;font-size:9.5px;line-height:9.5px;color:#141414;font-weight:normal;transform:scaleX(0.9);transform-origin:left top;">102</div>
<div class="a" style="left:372.4px;top:247.76px;font-size:9.5px;line-height:9.5px;color:#141414;font-weight:normal;transform:scaleX(1.0);transform-origin:left top;">Kasa zagranicznych środków pienięż...</div>
<svg class="a" style="left:548.4px;top:247.4px" width="8" height="8" viewBox="0 0 8 8"><path d="M0 3.9 L1.0 3.2 L2.0 4.8 L5.9 0 L6.5 0.4 L2.3 6.6 L1.6 6.6 Z" fill="#141414"/></svg>
<div class="a" style="left:215px;top:261.3px;width:763px;height:18.36px;background:#f2f2f2;"></div>
<div class="a" style="left:225px;top:266.12px;font-size:9.5px;line-height:9.5px;color:#141414;font-weight:normal;">B</div>
<div class="a" style="left:248.5px;top:266.12px;font-size:9.5px;line-height:9.5px;color:#141414;font-weight:normal;transform:scaleX(0.9);transform-origin:left top;">111</div>
<div class="a" style="left:372.4px;top:266.12px;font-size:9.5px;line-height:9.5px;color:#141414;font-weight:normal;transform:scaleX(1.0);transform-origin:left top;">Bieżący rachunek bankowy krajowyc...</div>
<svg class="a" style="left:548.4px;top:265.8px" width="8" height="8" viewBox="0 0 8 8"><path d="M0 3.9 L1.0 3.2 L2.0 4.8 L5.9 0 L6.5 0.4 L2.3 6.6 L1.6 6.6 Z" fill="#141414"/></svg>
<div class="a" style="left:225px;top:284.48px;font-size:9.5px;line-height:9.5px;color:#141414;font-weight:normal;">B</div>
<div class="a" style="left:248.5px;top:284.48px;font-size:9.5px;line-height:9.5px;color:#141414;font-weight:normal;transform:scaleX(0.9);transform-origin:left top;">112 v</div>
<div class="a" style="left:372.4px;top:284.48px;font-size:9.5px;line-height:9.5px;color:#141414;font-weight:normal;transform:scaleX(1.0);transform-origin:left top;">Rachunki bankowe środków pieniężn...</div>
<svg class="a" style="left:548.4px;top:284.1px" width="8" height="8" viewBox="0 0 8 8"><path d="M0 3.9 L1.0 3.2 L2.0 4.8 L5.9 0 L6.5 0.4 L2.3 6.6 L1.6 6.6 Z" fill="#141414"/></svg>
<svg class="a" style="left:682.9px;top:284.1px" width="8" height="8" viewBox="0 0 8 8"><path d="M0 3.9 L1.0 3.2 L2.0 4.8 L5.9 0 L6.5 0.4 L2.3 6.6 L1.6 6.6 Z" fill="#141414"/></svg>
<div class="a" style="left:215px;top:298.0px;width:763px;height:18.36px;background:#f2f2f2;"></div>
<div class="a" style="left:225px;top:302.84px;font-size:9.5px;line-height:9.5px;color:#141414;font-weight:normal;">B</div>
<div class="a" style="left:252.8px;top:302.84px;font-size:9.5px;line-height:9.5px;color:#141414;font-weight:normal;transform:scaleX(0.97);transform-origin:left top;">112-Rachunki bankowe</div>
<svg class="a" style="left:548.4px;top:302.5px" width="8" height="8" viewBox="0 0 8 8"><path d="M0 3.9 L1.0 3.2 L2.0 4.8 L5.9 0 L6.5 0.4 L2.3 6.6 L1.6 6.6 Z" fill="#141414"/></svg>
<svg class="a" style="left:682.9px;top:302.5px" width="8" height="8" viewBox="0 0 8 8"><path d="M0 3.9 L1.0 3.2 L2.0 4.8 L5.9 0 L6.5 0.4 L2.3 6.6 L1.6 6.6 Z" fill="#141414"/></svg>
<div class="a" style="left:756px;top:302.84px;font-size:9.5px;line-height:9.5px;color:#141414;font-weight:normal;transform:scaleX(0.95);transform-origin:left top;">Stała, 2 znaki</div>
<div class="a" style="left:225px;top:321.20px;font-size:9.5px;line-height:9.5px;color:#141414;font-weight:normal;">B</div>
<div class="a" style="left:248.5px;top:321.20px;font-size:9.5px;line-height:9.5px;color:#141414;font-weight:normal;transform:scaleX(0.9);transform-origin:left top;">113</div>
<div class="a" style="left:372.4px;top:321.20px;font-size:9.5px;line-height:9.5px;color:#141414;font-weight:normal;transform:scaleX(1.0);transform-origin:left top;">Akredytywy</div>
<svg class="a" style="left:548.4px;top:320.8px" width="8" height="8" viewBox="0 0 8 8"><path d="M0 3.9 L1.0 3.2 L2.0 4.8 L5.9 0 L6.5 0.4 L2.3 6.6 L1.6 6.6 Z" fill="#141414"/></svg>
<div class="a" style="left:215px;top:334.7px;width:763px;height:18.36px;background:#f2f2f2;"></div>
<div class="a" style="left:225px;top:339.56px;font-size:9.5px;line-height:9.5px;color:#141414;font-weight:normal;">B</div>
<div class="a" style="left:248.5px;top:339.56px;font-size:9.5px;line-height:9.5px;color:#141414;font-weight:normal;transform:scaleX(0.9);transform-origin:left top;">119</div>
<div class="a" style="left:372.4px;top:339.56px;font-size:9.5px;line-height:9.5px;color:#141414;font-weight:normal;transform:scaleX(1.0);transform-origin:left top;">Inne rachunki bankowe</div>
<svg class="a" style="left:548.4px;top:339.2px" width="8" height="8" viewBox="0 0 8 8"><path d="M0 3.9 L1.0 3.2 L2.0 4.8 L5.9 0 L6.5 0.4 L2.3 6.6 L1.6 6.6 Z" fill="#141414"/></svg>
<div class="a" style="left:225px;top:357.92px;font-size:9.5px;line-height:9.5px;color:#141414;font-weight:normal;">B</div>
<div class="a" style="left:248.5px;top:357.92px;font-size:9.5px;line-height:9.5px;color:#141414;font-weight:normal;transform:scaleX(0.9);transform-origin:left top;">121</div>
<div class="a" style="left:372.4px;top:357.92px;font-size:9.5px;line-height:9.5px;color:#141414;font-weight:normal;transform:scaleX(1.0);transform-origin:left top;">Rachunek bankowy lokat długotermi...</div>
<svg class="a" style="left:548.4px;top:357.6px" width="8" height="8" viewBox="0 0 8 8"><path d="M0 3.9 L1.0 3.2 L2.0 4.8 L5.9 0 L6.5 0.4 L2.3 6.6 L1.6 6.6 Z" fill="#141414"/></svg>
<div class="a" style="left:215px;top:371.4px;width:763px;height:18.36px;background:#f2f2f2;"></div>
<div class="a" style="left:225px;top:376.28px;font-size:9.5px;line-height:9.5px;color:#141414;font-weight:normal;">B</div>
<div class="a" style="left:248.5px;top:376.28px;font-size:9.5px;line-height:9.5px;color:#141414;font-weight:normal;transform:scaleX(0.9);transform-origin:left top;">122</div>
<div class="a" style="left:372.4px;top:376.28px;font-size:9.5px;line-height:9.5px;color:#141414;font-weight:normal;transform:scaleX(1.0);transform-origin:left top;">Rachunek bankowy lokat krótkoterm...</div>
<svg class="a" style="left:548.4px;top:375.9px" width="8" height="8" viewBox="0 0 8 8"><path d="M0 3.9 L1.0 3.2 L2.0 4.8 L5.9 0 L6.5 0.4 L2.3 6.6 L1.6 6.6 Z" fill="#141414"/></svg>
<div class="a" style="left:225px;top:394.64px;font-size:9.5px;line-height:9.5px;color:#141414;font-weight:normal;">B</div>
<div class="a" style="left:248.5px;top:394.64px;font-size:9.5px;line-height:9.5px;color:#141414;font-weight:normal;transform:scaleX(0.9);transform-origin:left top;">131 v</div>
<div class="a" style="left:372.4px;top:394.64px;font-size:9.5px;line-height:9.5px;color:#141414;font-weight:normal;transform:scaleX(1.0);transform-origin:left top;">Inne środki pieniężne</div>
<svg class="a" style="left:548.4px;top:394.3px" width="8" height="8" viewBox="0 0 8 8"><path d="M0 3.9 L1.0 3.2 L2.0 4.8 L5.9 0 L6.5 0.4 L2.3 6.6 L1.6 6.6 Z" fill="#141414"/></svg>
<div class="a" style="left:215px;top:408.1px;width:763px;height:18.36px;background:#f2f2f2;"></div>
<div class="a" style="left:225px;top:413.00px;font-size:9.5px;line-height:9.5px;color:#141414;font-weight:normal;">B</div>
<div class="a" style="left:252.8px;top:413.00px;font-size:9.5px;line-height:9.5px;color:#141414;font-weight:normal;transform:scaleX(0.97);transform-origin:left top;">131-Rachunki bankowe</div>
<svg class="a" style="left:548.4px;top:412.6px" width="8" height="8" viewBox="0 0 8 8"><path d="M0 3.9 L1.0 3.2 L2.0 4.8 L5.9 0 L6.5 0.4 L2.3 6.6 L1.6 6.6 Z" fill="#141414"/></svg>
<div class="a" style="left:756px;top:413.00px;font-size:9.5px;line-height:9.5px;color:#141414;font-weight:normal;transform:scaleX(0.95);transform-origin:left top;">Stała, 2 znaki</div>
<div class="a" style="left:225px;top:431.36px;font-size:9.5px;line-height:9.5px;color:#141414;font-weight:normal;">B</div>
<div class="a" style="left:248.5px;top:431.36px;font-size:9.5px;line-height:9.5px;color:#141414;font-weight:normal;transform:scaleX(0.9);transform-origin:left top;">132</div>
<div class="a" style="left:372.4px;top:431.36px;font-size:9.5px;line-height:9.5px;color:#141414;font-weight:normal;transform:scaleX(1.0);transform-origin:left top;">Inne aktywa pieniężne</div>
<svg class="a" style="left:548.4px;top:431.0px" width="8" height="8" viewBox="0 0 8 8"><path d="M0 3.9 L1.0 3.2 L2.0 4.8 L5.9 0 L6.5 0.4 L2.3 6.6 L1.6 6.6 Z" fill="#141414"/></svg>
<div class="a" style="left:978.4px;top:149px;width:13.6px;height:296px;overflow:hidden;background:#fff">
<div style="position:absolute;left:0;top:-18.7px;width:14px;height:18.36px;background:#f2f2f2"></div>
<div style="position:absolute;left:0;top:18.1px;width:14px;height:18.36px;background:#f2f2f2"></div>
<div style="position:absolute;left:0;top:54.8px;width:14px;height:18.36px;background:#f2f2f2"></div>
<div style="position:absolute;left:0;top:91.5px;width:14px;height:18.36px;background:#f2f2f2"></div>
<div style="position:absolute;left:0;top:128.2px;width:14px;height:18.36px;background:#f2f2f2"></div>
<div style="position:absolute;left:0;top:164.9px;width:14px;height:18.36px;background:#f2f2f2"></div>
<div style="position:absolute;left:0;top:201.7px;width:14px;height:18.36px;background:#f2f2f2"></div>
<div style="position:absolute;left:0;top:238.4px;width:14px;height:18.36px;background:#f2f2f2"></div>
<div style="position:absolute;left:0;top:275.1px;width:14px;height:18.36px;background:#f2f2f2"></div>
</div>
<div class="a" style="left:982.2px;top:170.5px;width:9.8px;height:16.5px;background:#7f7f7f;"></div>
<svg class="a" style="left:983.5px;top:434.5px" width="8" height="5"><path d="M0.5 0.5 L4 4 L7.5 0.5" fill="none" stroke="#666" stroke-width="1.1"/></svg>
<svg class="a" style="left:992px;top:48px" width="8" height="561" viewBox="992 48 8 561"><rect x="992" y="48" width="8" height="561" fill="#c9c9c9"/><path d="M992 48 H1000 V110 L992 118 Z" fill="#dadada"/><path d="M992 192 L1000 184 V210 L992 218 Z" fill="#d6d6d6"/><path d="M992 505 L1000 495 V545 L992 553 Z" fill="#d8d8d8"/><path d="M992 572 L1000 562 V609 H992 Z" fill="#d8d8d8"/></svg>
<div class="a" style="left:215px;top:445px;width:777px;height:4px;background:#e2e2e2;"></div>
<div class="a" style="left:215px;top:449px;width:777px;height:21px;background:#ebebeb;"></div>
<div class="a" style="left:215px;top:469.5px;width:777px;height:1.2px;background:#d6d6d6;"></div>
<div class="a" style="left:218px;top:451px;width:74px;height:18.8px;background:#ffffff;"></div>
<svg class="a" style="left:0;top:0;overflow:visible" width="1" height="1"><text x="226.3" y="463.2" font-family="Liberation Sans" font-size="9.6" fill="#555" font-weight="normal" text-anchor="start" textLength="57.5" lengthAdjust="spacingAndGlyphs" style="white-space:pre;">WIZYTÓWKA</text></svg>
<svg class="a" style="left:0;top:0;overflow:visible" width="1" height="1"><text x="299.7" y="463.2" font-family="Liberation Sans" font-size="9.6" fill="#606060" font-weight="normal" text-anchor="start" textLength="68.7" lengthAdjust="spacingAndGlyphs" style="white-space:pre;">PODSTAWOWE</text></svg>
<svg class="a" style="left:0;top:0;overflow:visible" width="1" height="1"><text x="384.4" y="463.2" font-family="Liberation Sans" font-size="9.6" fill="#606060" font-weight="normal" text-anchor="start" textLength="132" lengthAdjust="spacingAndGlyphs" style="white-space:pre;">UŻYCIE W SPRAWOZDANIACH</text></svg>
<svg class="a" style="left:0;top:0;overflow:visible" width="1" height="1"><text x="532.7" y="463.2" font-family="Liberation Sans" font-size="9.6" fill="#606060" font-weight="normal" text-anchor="start" textLength="64.3" lengthAdjust="spacingAndGlyphs" style="white-space:pre;">POLA WŁASNE</text></svg>
<div class="a" style="left:215.2px;top:483px;width:58.7px;height:41.2px;background:#7f7f7f;"></div>
<svg class="a" style="left:0;top:0;overflow:visible" width="1" height="1"><text x="223.6" y="513.9" font-family="Liberation Sans" font-size="33" fill="#f2f2f2" font-weight="normal" text-anchor="start" textLength="42.2" lengthAdjust="spacingAndGlyphs" style="white-space:pre;">KO</text></svg>
<div class="a" style="left:283.2px;top:486.51px;font-size:17px;line-height:17px;color:#707070;font-weight:normal;">101</div>
<svg class="a" style="left:319px;top:491.5px" width="9" height="6"><path d="M0.7 0.7 L4.5 4.5 L8.3 0.7" fill="none" stroke="#777" stroke-width="1.3"/></svg>
<svg class="a" style="left:0;top:0;overflow:visible" width="1" height="1"><text x="283" y="520.1" font-family="Liberation Sans" font-size="12.3" fill="#7a7a7a" font-weight="normal" text-anchor="start" textLength="342" lengthAdjust="spacingAndGlyphs" style="white-space:pre;">Syntetyka  <tspan font-size="8" dy="-2" fill="#999">•</tspan><tspan dy="2">  </tspan>Bilansowe  <tspan font-size="8" dy="-2" fill="#999">•</tspan><tspan dy="2">  </tspan>Kasa krajowych środków pieniężnych</text></svg>
<svg class="a" style="left:0;top:0;overflow:visible" width="1" height="1"><text x="769.1" y="502.6" font-family="Liberation Sans" font-size="17.3" fill="#767676" font-weight="normal" text-anchor="start" textLength="76.1" lengthAdjust="spacingAndGlyphs" style="white-space:pre;">Saldo Wn</text></svg>
<svg class="a" style="left:0;top:0;overflow:visible" width="1" height="1"><text x="856" y="502.6" font-family="Liberation Sans" font-size="17.3" fill="#767676" font-weight="normal" text-anchor="start" textLength="104.4" lengthAdjust="spacingAndGlyphs" style="white-space:pre;">2 000,00 PLN</text></svg>
<svg class="a" style="left:0;top:0;overflow:visible" width="1" height="1"><text x="769" y="520.1" font-family="Liberation Sans" font-size="12.3" fill="#858585" font-weight="normal" text-anchor="start" textLength="83.4" lengthAdjust="spacingAndGlyphs" style="white-space:pre;">Obroty Wn/Ma</text></svg>
<svg class="a" style="left:0;top:0;overflow:visible" width="1" height="1"><text x="882.9" y="520.1" font-family="Liberation Sans" font-size="12.3" fill="#858585" font-weight="normal" text-anchor="start" textLength="77.5" lengthAdjust="spacingAndGlyphs" style="white-space:pre;">0,00/0,00 PLN</text></svg>
<svg class="a" style="left:984px;top:475.5px" width="7" height="4"><path d="M0.5 3.5 L3.5 0.7 L6.5 3.5" fill="none" stroke="#777" stroke-width="1"/></svg>
<svg class="a" style="left:0;top:0;overflow:visible" width="1" height="1"><text x="984" y="603.6" font-family="Liberation Sans" font-size="8" fill="#333" font-weight="normal" text-anchor="start" textLength="13.5" lengthAdjust="spacingAndGlyphs" style="white-space:pre;">+/-</text></svg>
</body></html>
